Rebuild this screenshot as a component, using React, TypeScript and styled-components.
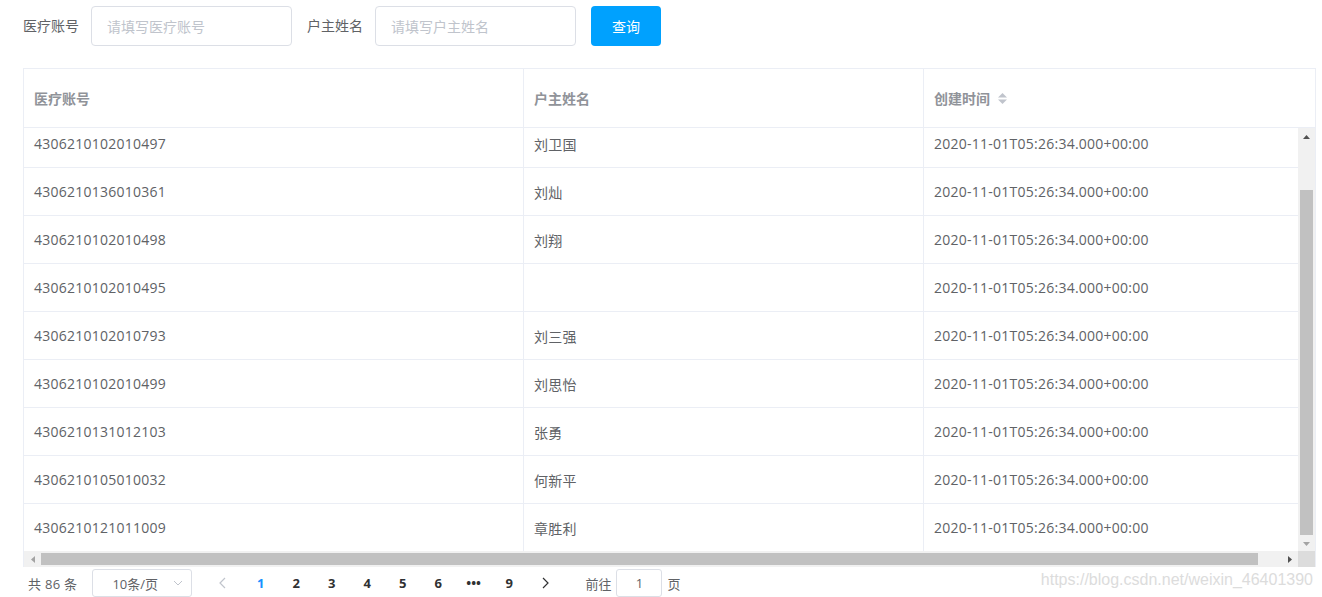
import React from "react";
import styled, { createGlobalStyle } from "styled-components";

const GlobalStyle = createGlobalStyle`
  html, body { margin: 0; padding: 0; background: #fff; }
  body {
    font-family: "Open Sans", "Noto Sans CJK SC", sans-serif;
    font-size: 14px;
    color: #606266;
    overflow: hidden;
  }
  * { box-sizing: border-box; }
`;

const Page = styled.div`
  position: relative;
  width: 1322px;
  height: 597px;
  padding: 6px 6px 0 23px;
  overflow: hidden;
`;

const SearchBar = styled.div`
  display: flex;
  align-items: center;
  height: 40px;
`;

const Label = styled.span`
  font-size: 14px;
  color: #606266;
  margin-right: 12px;
  line-height: 40px;
`;

const TextInput = styled.input`
  width: 201px;
  height: 40px;
  border: 1px solid #dcdfe6;
  border-radius: 4px;
  padding: 0 15px;
  font-family: inherit;
  font-size: 14px;
  color: #606266;
  margin-right: 15px;
  outline: none;
  &::placeholder { color: #c0c4cc; }
`;

const PrimaryButton = styled.button`
  width: 70px;
  height: 40px;
  border: none;
  border-radius: 4px;
  background: #00a1fe;
  color: #fff;
  font-family: inherit;
  font-size: 14px;
  cursor: pointer;
`;

const Table = styled.div`
  margin-top: 22px;
  width: 1293px;
  border: 1px solid #ebeef5;
  border-bottom: none;
`;

const HeaderRow = styled.div`
  display: grid;
  grid-template-columns: 500px 400px 1fr;
  height: 59px;
  border-bottom: 1px solid #ebeef5;
`;

const HeaderCell = styled.div<{ $last?: boolean }>`
  display: flex;
  align-items: center;
  padding: 0 10px;
  font-size: 14px;
  font-weight: bold;
  color: #909399;
  border-right: ${(p) => (p.$last ? "none" : "1px solid #ebeef5")};
`;

const SortCaret = styled.span`
  display: inline-flex;
  margin-left: 7px;
  width: 11px;
  height: 14px;
  align-items: center;
`;

const BodyArea = styled.div`
  display: grid;
  grid-template-columns: 1fr 17px;
  grid-template-rows: 423px 16px;
`;

const Viewport = styled.div`
  overflow: hidden;
`;

const BodyInner = styled.div`
  margin-top: -8px;
`;

const BodyRow = styled.div`
  display: grid;
  grid-template-columns: 500px 400px 1fr;
  height: 48px;
  border-bottom: 1px solid #ebeef5;
`;

const BodyCell = styled.div<{ $last?: boolean }>`
  display: flex;
  align-items: center;
  padding: 0 10px;
  font-size: 14px;
  letter-spacing: 0.25px;
  color: #606266;
  white-space: nowrap;
  border-right: ${(p) => (p.$last ? "none" : "1px solid #ebeef5")};
`;

const VScroll = styled.div`
  background: #f1f1f1;
  display: flex;
  flex-direction: column;
  align-items: center;
`;

const ArrowBox = styled.div`
  width: 17px;
  height: 17px;
  display: flex;
  align-items: center;
  justify-content: center;
  flex: none;
`;

const VTrack = styled.div`
  flex: 1;
  width: 100%;
  display: flex;
  flex-direction: column;
  padding: 45px 2px 0 2px;
`;

const VThumb = styled.div`
  height: 345px;
  background: #c1c1c1;
`;

const HScroll = styled.div`
  background: #f1f1f1;
  display: flex;
  align-items: center;
`;

const HTrack = styled.div`
  flex: 1;
  height: 100%;
  display: flex;
  align-items: center;
  padding: 2px 0;
`;

const HThumb = styled.div`
  width: 1217px;
  height: 100%;
  background: #c1c1c1;
`;

const Corner = styled.div`
  background: #dcdcdc;
`;

const Pagination = styled.div`
  display: flex;
  align-items: center;
  height: 28px;
  margin-top: 2px;
  font-size: 13px;
  color: #606266;
`;

const Total = styled.span`
  margin-left: 5px;
  margin-right: 15px;
  letter-spacing: 0.3px;
`;

const SizeSelect = styled.div`
  width: 100px;
  height: 28px;
  border: 1px solid #dcdfe6;
  border-radius: 3px;
  display: flex;
  align-items: center;
  padding: 0 8px 0 19px;
  justify-content: space-between;
  margin-right: 12px;
`;

const NavButton = styled.span<{ $disabled?: boolean }>`
  min-width: 35.5px;
  height: 28px;
  display: flex;
  align-items: center;
  justify-content: center;
  color: ${(p) => (p.$disabled ? "#c0c4cc" : "#303133")};
`;

const Pager = styled.ul`
  display: flex;
  list-style: none;
  margin: 0 1px 0 3px;
  padding: 0;
`;

const PageItem = styled.li<{ $active?: boolean }>`
  min-width: 35.5px;
  height: 28px;
  display: flex;
  align-items: center;
  justify-content: center;
  font-family: "Open Sans", "Noto Sans", sans-serif;
  font-weight: bold;
  font-size: 13px;
  color: ${(p) => (p.$active ? "#1890ff" : "#303133")};
`;

const Jump = styled.span`
  display: flex;
  align-items: center;
  margin-left: 22px;
  gap: 5px;
`;

const JumpInput = styled.div`
  width: 46px;
  height: 28px;
  border: 1px solid #dcdfe6;
  border-radius: 3px;
  display: flex;
  align-items: center;
  justify-content: center;
`;

const Watermark = styled.div`
  position: absolute;
  right: 9px;
  bottom: 8px;
  font-family: "Liberation Sans", Arial, sans-serif;
  font-size: 16px;
  color: #dcdcdc;
  pointer-events: none;
`;

const Tri = ({ dir, color }: { dir: "up" | "down" | "left" | "right"; color: string }) => {
  const pts: Record<string, string> = {
    up: "0,4 3.5,0 7,4",
    down: "0,0 3.5,4 7,0",
    left: "4,0 4,7 0,3.5",
    right: "0,0 0,7 4,3.5",
  };
  const horiz = dir === "left" || dir === "right";
  return (
    <svg width={horiz ? 4 : 7} height={horiz ? 7 : 4} viewBox={horiz ? "0 0 4 7" : "0 0 7 4"}>
      <polygon points={pts[dir]} fill={color} />
    </svg>
  );
};

const rows = [
  ["4306210102010497", "刘卫国"],
  ["4306210136010361", "刘灿"],
  ["4306210102010498", "刘翔"],
  ["4306210102010495", ""],
  ["4306210102010793", "刘三强"],
  ["4306210102010499", "刘思怡"],
  ["4306210131012103", "张勇"],
  ["4306210105010032", "何新平"],
  ["4306210121011009", "章胜利"],
  ["4306210102010500", "刘正"],
];

const TIME = "2020-11-01T05:26:34.000+00:00";

export default function App() {
  return (
    <>
      <GlobalStyle />
      <Page>
        <SearchBar>
          <Label>医疗账号</Label>
          <TextInput placeholder="请填写医疗账号" />
          <Label>户主姓名</Label>
          <TextInput placeholder="请填写户主姓名" />
          <PrimaryButton>查询</PrimaryButton>
        </SearchBar>

        <Table>
          <HeaderRow>
            <HeaderCell>医疗账号</HeaderCell>
            <HeaderCell>户主姓名</HeaderCell>
            <HeaderCell $last>
              创建时间
              <SortCaret>
                <svg width="11" height="13" viewBox="0 0 11 13">
                  <polygon points="1,5.5 5.5,1 10,5.5" fill="#c0c4cc" />
                  <polygon points="1,7.5 5.5,12 10,7.5" fill="#c0c4cc" />
                </svg>
              </SortCaret>
            </HeaderCell>
          </HeaderRow>
          <BodyArea>
            <Viewport>
              <BodyInner>
                {rows.map(([id, name]) => (
                  <BodyRow key={id}>
                    <BodyCell>{id}</BodyCell>
                    <BodyCell>{name}</BodyCell>
                    <BodyCell $last>{TIME}</BodyCell>
                  </BodyRow>
                ))}
              </BodyInner>
            </Viewport>
            <VScroll>
              <ArrowBox>
                <Tri dir="up" color="#505050" />
              </ArrowBox>
              <VTrack>
                <VThumb />
              </VTrack>
              <ArrowBox>
                <Tri dir="down" color="#a3a3a3" />
              </ArrowBox>
            </VScroll>
            <HScroll>
              <ArrowBox>
                <Tri dir="left" color="#a3a3a3" />
              </ArrowBox>
              <HTrack>
                <HThumb />
              </HTrack>
              <ArrowBox>
                <Tri dir="right" color="#505050" />
              </ArrowBox>
            </HScroll>
            <Corner />
          </BodyArea>
        </Table>

        <Pagination>
          <Total>共 86 条</Total>
          <SizeSelect>
            <span>10条/页</span>
            <svg width="10" height="6" viewBox="0 0 10 6">
              <polyline points="1,1 5,5 9,1" fill="none" stroke="#c0c4cc" strokeWidth="1" />
            </svg>
          </SizeSelect>
          <NavButton $disabled>
            <svg width="7" height="12" viewBox="0 0 7 12">
              <polyline points="6,1 1,6 6,11" fill="none" stroke="#c0c4cc" strokeWidth="1.2" />
            </svg>
          </NavButton>
          <Pager>
            <PageItem $active>1</PageItem>
            <PageItem>2</PageItem>
            <PageItem>3</PageItem>
            <PageItem>4</PageItem>
            <PageItem>5</PageItem>
            <PageItem>6</PageItem>
            <PageItem>•••</PageItem>
            <PageItem>9</PageItem>
          </Pager>
          <NavButton>
            <svg width="7" height="12" viewBox="0 0 7 12">
              <polyline points="1,1 6,6 1,11" fill="none" stroke="#303133" strokeWidth="1.2" />
            </svg>
          </NavButton>
          <Jump>
            前往
            <JumpInput>1</JumpInput>
            页
          </Jump>
        </Pagination>
        <Watermark>https://blog.csdn.net/weixin_46401390</Watermark>
      </Page>
    </>
  );
}
